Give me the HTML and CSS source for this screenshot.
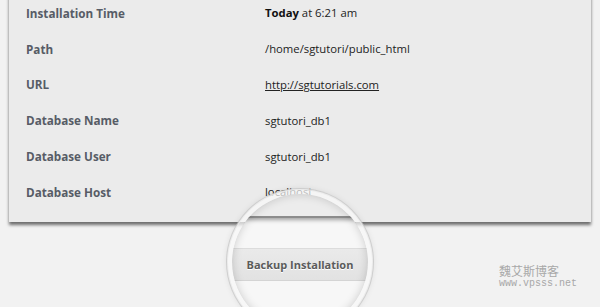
FILE: index.html
```html
<!DOCTYPE html>
<html lang="en">

<head>
    <meta charset="UTF-8">
    <meta name="viewport" content="width=device-width, initial-scale=1.0">
    <title>Installation Details</title>
    <link rel="stylesheet" href="styles.css">
</head>

<body>
    <main class="page">
        <section class="panel">
            <div class="row">
                <span class="label">Installation Time</span>
                <span class="value"><b>Today</b> at 6:21 am</span>
            </div>
            <div class="row">
                <span class="label">Path</span>
                <span class="value">/home/sgtutori/public_html</span>
            </div>
            <div class="row">
                <span class="label">URL</span>
                <span class="value"><a href="#">http://sgtutorials.com</a></span>
            </div>
            <div class="row">
                <span class="label">Database Name</span>
                <span class="value">sgtutori_db1</span>
            </div>
            <div class="row">
                <span class="label">Database User</span>
                <span class="value">sgtutori_db1</span>
            </div>
            <div class="row">
                <span class="label">Database Host</span>
                <span class="value">localhost</span>
            </div>
        </section>

        <!-- magnifier over the backup button -->
        <div class="lens">
            <div class="lens-top"></div>
            <div class="lens-bottom">
                <button class="backup">Backup Installation</button>
            </div>
        </div>

        <div class="watermark">
            <span class="wm-cn">魏艾斯博客</span>
            <span class="wm-url">www.vpsss.net</span>
        </div>
    </main>
</body>

</html>
```

FILE: styles.css
```css
* {
    margin: 0;
    padding: 0;
    box-sizing: border-box;
}

body {
    font-family: "Open Sans", Arial, sans-serif;
    background-color: #f2f2f2;
    overflow: hidden;
}

.page {
    position: relative;
    display: flow-root;
    height: 307px;
    padding: 0 9px;
    overflow: hidden;
}

.panel {
    margin-top: -20px;
    padding: 15px 17px 12px;
    background-color: #ebebeb;
    box-shadow: 0 3px 3px rgba(0, 0, 0, 0.55);
}

.row {
    display: flex;
    align-items: center;
    height: 35.8px;
}

.label {
    width: 239px;
    font-size: 11.7px;
    font-weight: 700;
    color: #575c66;
}

.value {
    font-size: 11.3px;
    color: #222;
}

.value b {
    font-weight: 700;
    color: #111;
}

.value a {
    color: #222;
    text-decoration: underline;
}

.lens {
    position: absolute;
    left: 227px;
    top: 189px;
    width: 146px;
    height: 146px;
    border-radius: 50%;
    overflow: hidden;
    border: 5px solid rgba(250, 250, 250, 0.7);
    background-clip: padding-box;
    box-shadow: 0 0 0 1px rgba(200, 200, 200, 0.8), 0 0 6px rgba(0, 0, 0, 0.1);
    display: flex;
    flex-direction: column;
    background-color: #f7f7f7;
}

.lens::after {
    content: "";
    position: absolute;
    inset: 0;
    border-radius: 50%;
    box-shadow: inset 0 0 10px rgba(0, 0, 0, 0.18);
}

.lens-top {
    height: 24px;
    background-color: #ececec;
    border-bottom: 2px solid #8c8c8c;
    box-shadow: 0 2px 4px rgba(0, 0, 0, 0.35);
}

.lens-bottom {
    flex: 1;
    padding-top: 30px;
}

.backup {
    display: block;
    width: 100%;
    height: 33px;
    border: none;
    border-top: 1px solid #dcdcdc;
    border-bottom: 1px solid #d4d4d4;
    background: linear-gradient(#eaeaea, #e2e2e2);
    font-family: "Open Sans", Arial, sans-serif;
    font-size: 11px;
    font-weight: 700;
    color: #5b5b5b;
    text-shadow: 0 1px 0 #fff;
}

.watermark {
    position: absolute;
    right: 23px;
    bottom: 17px;
    display: flex;
    flex-direction: column;
    color: #a8a8a8;
}

.wm-cn {
    font-family: "Noto Sans CJK SC", sans-serif;
    font-size: 12px;
    line-height: 14px;
}

.wm-url {
    font-family: "Liberation Mono", monospace;
    font-size: 10px;
    line-height: 12px;
}
```
